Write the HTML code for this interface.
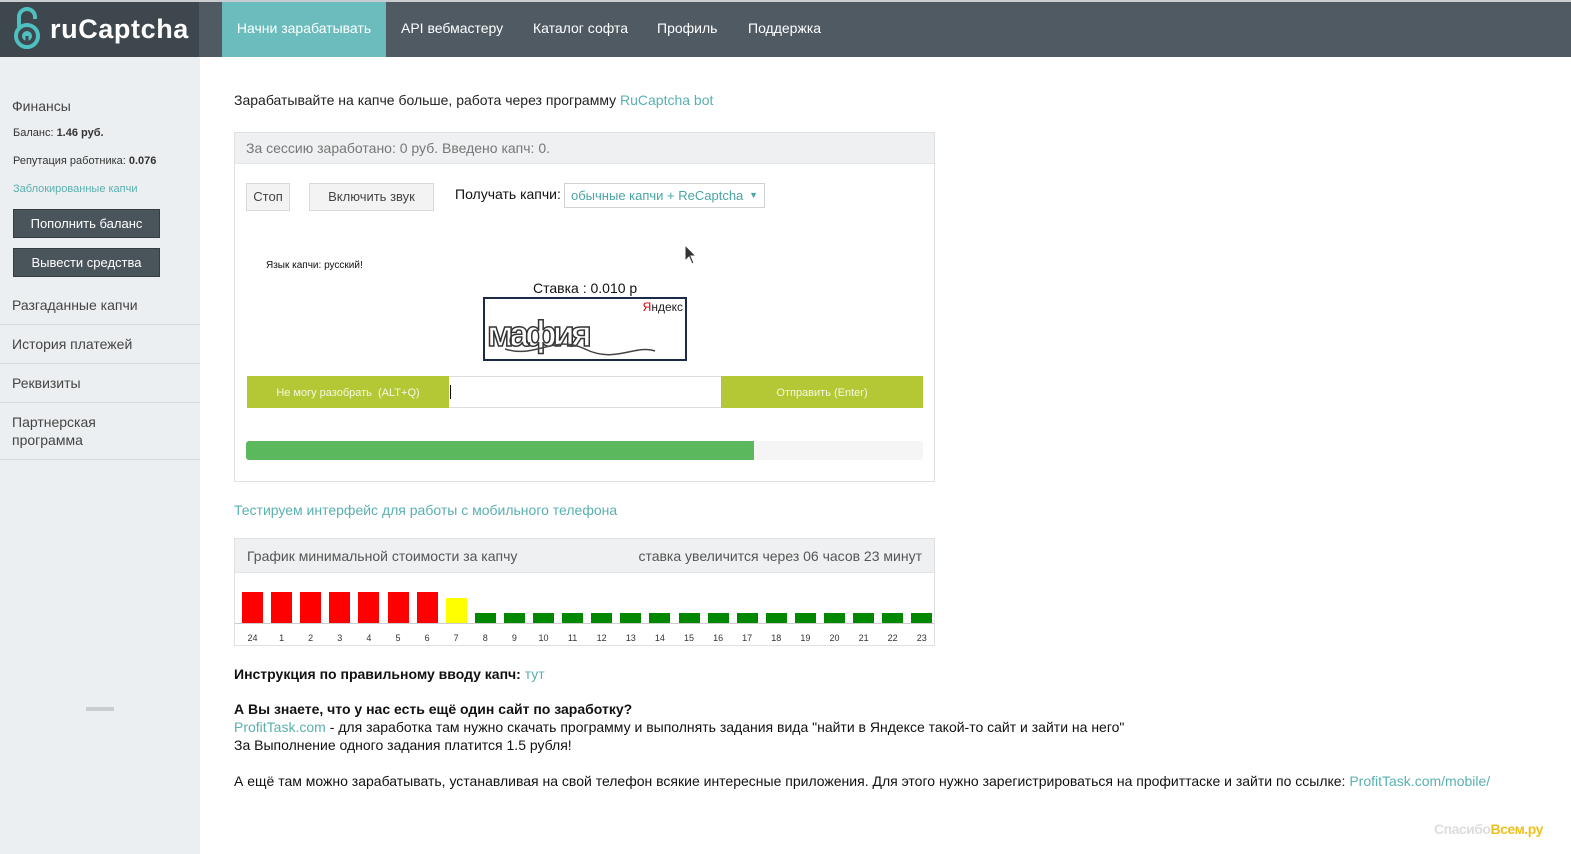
<!DOCTYPE html>
<html><head><meta charset="utf-8"><style>
*{margin:0;padding:0;box-sizing:border-box}
body{width:1571px;height:852px;position:relative;overflow:hidden;background:#fff;font-family:"Liberation Sans","Noto Sans CJK SC",sans-serif;color:#222}
#w{position:absolute;left:1px;top:1px;width:1571px;height:852px}
.a{position:absolute;white-space:nowrap}
.top{left:-1px;top:-1px;width:1572px;height:57px;background:#4f5a62;border-top:2px solid #c9cdd0}
.logo{left:-1px;top:1px;width:199px;height:55px;background:#3e474e}
.nav{top:1px;height:55px;line-height:52px;font-size:14px;color:#fff}
.side{left:-1px;top:56px;width:200px;height:797px;background:#eceff1}
.sb{left:13px;width:147px;height:29px;background:#4a545b;border:1px solid #353d43;color:#fff;font-size:13px;text-align:center;line-height:27px}
.si{left:-1px;width:200px;border-bottom:1px solid #d6dadd;font-size:14px;color:#444;padding-left:12px}
.lnk{color:#5ab0b0}
.bar{position:absolute;width:21px}
.lbl{position:absolute;top:632px;font-size:9px;color:#333;width:29px;text-align:center}
</style></head><body><div id="w">
<div class="a top"></div>
<div class="a logo">
<svg style="position:absolute;left:13px;top:5px" width="30" height="42" viewBox="0 0 30 42"><path d="M6 20 V10 a8 8 0 0 1 16 0 V12" fill="none" stroke="#4fc0c0" stroke-width="4"/><circle cx="14" cy="29" r="11" fill="none" stroke="#4fc0c0" stroke-width="4"/><circle cx="14" cy="29" r="5" fill="#4fc0c0"/><rect x="12.5" y="29" width="3" height="6" fill="#3e474e"/></svg>
<div class="a" style="left:50px;top:12px;font-size:27px;font-weight:bold;color:#fff;letter-spacing:0.6px">ruCaptcha</div>
</div>
<div class="a nav" style="left:221px;width:164px;background:#6bbcbc;text-align:center">Начни зарабатывать</div>
<div class="a nav" style="left:400px">API вебмастеру</div>
<div class="a nav" style="left:532px">Каталог софта</div>
<div class="a nav" style="left:656px">Профиль</div>
<div class="a nav" style="left:747px">Поддержка</div>

<div class="a side"></div>
<div class="a" style="left:11px;top:97px;font-size:14px;color:#444">Финансы</div>
<div class="a" style="left:12px;top:126px;font-size:11px;color:#333">Баланс: <b>1.46 руб.</b></div>
<div class="a" style="left:12px;top:154px;font-size:11px;color:#333">Репутация работника: <b>0.076</b></div>
<div class="a lnk" style="left:12px;top:182px;font-size:11px">Заблокированные капчи</div>
<div class="a sb" style="left:12px;top:208px">Пополнить баланс</div>
<div class="a sb" style="left:12px;top:247px">Вывести средства</div>
<div class="a si" style="top:287px;height:37px;line-height:34px">Разгаданные капчи</div>
<div class="a si" style="top:324px;height:39px;line-height:38px">История платежей</div>
<div class="a si" style="top:363px;height:39px;line-height:38px">Реквизиты</div>
<div class="a si" style="top:402px;height:57px;padding-top:10px;line-height:18px;white-space:normal">Партнерская<br>программа</div>
<div class="a" style="left:85px;top:706px;width:28px;height:4px;background:#c8cdd1"></div>

<div class="a" style="left:233px;top:91px;font-size:14px">Зарабатывайте на капче больше, работа через программу <span class="lnk">RuCaptcha bot</span></div>
<div class="a" style="left:233px;top:131px;width:701px;height:350px;border:1px solid #dfe2e4"></div>
<div class="a" style="left:234px;top:132px;width:699px;height:31px;background:#eef0f1;border-bottom:1px solid #e2e5e7;font-size:14px;color:#777;padding-left:11px;line-height:31px">За сессию заработано: 0 руб. Введено капч: 0.</div>
<div class="a" style="left:245px;top:182px;width:44px;height:28px;background:#f3f3f3;border:1px solid #d8d8d8;font-size:13px;color:#444;text-align:center;line-height:26px">Стоп</div>
<div class="a" style="left:308px;top:182px;width:125px;height:28px;background:#f3f3f3;border:1px solid #d8d8d8;font-size:13px;color:#444;text-align:center;line-height:26px">Включить звук</div>
<div class="a" style="left:454px;top:185px;font-size:14px;color:#111">Получать капчи:</div>
<div class="a" style="left:563px;top:182px;width:201px;height:25px;border:1px solid #cfd3d6;font-size:13px;color:#4aa5a5;padding-left:6px;line-height:23px">обычные капчи + ReCaptcha <span style="position:absolute;right:6px;font-size:9px">▼</span></div>
<svg class="a" style="left:683px;top:243px" width="14" height="22" viewBox="0 0 14 22"><path d="M1 1 V17 L5 13 L8 20 L10 19 L7 12 L12 12 Z" fill="#333" stroke="#fff" stroke-width="1"/></svg>
<div class="a" style="left:265px;top:259px;font-size:10px;color:#111">Язык капчи: русский!</div>
<div class="a" style="left:532px;top:279px;font-size:14px;color:#111">Ставка : 0.010 р</div>
<div class="a" style="left:482px;top:296px;width:204px;height:64px;border:2px solid #1b2a48;background:#fff;overflow:hidden">
<div class="a" style="right:2px;top:1px;font-size:12px;color:#222"><span style="color:#d00">Я</span>ндекс</div>
<div class="a" style="left:2px;top:14px;font-size:36px;font-weight:bold;color:#fff;-webkit-text-stroke:1.5px #333;letter-spacing:-4px">мафия</div>
<svg class="a" style="left:0;top:30px" width="200" height="30"><path d="M20 20 C50 30 70 5 100 20 S150 15 170 22" fill="none" stroke="#444" stroke-width="1.5"/></svg>
</div>
<div class="a" style="left:246px;top:375px;width:676px;height:32px;border:1px solid #ddd;background:#fff"></div>
<div class="a" style="left:246px;top:375px;width:202px;height:32px;background:#b4c836;color:#f4f8e0;font-size:11px;text-align:center;line-height:34px">Не могу разобрать&nbsp; (ALT+Q)</div>
<div class="a" style="left:449px;top:384px;width:1px;height:14px;background:#000"></div>
<div class="a" style="left:720px;top:375px;width:202px;height:32px;background:#b4c836;color:#f4f8e0;font-size:11px;text-align:center;line-height:34px">Отправить (Enter)</div>
<div class="a" style="left:245px;top:440px;width:677px;height:19px;background:#f5f5f5;border-radius:3px"></div>
<div class="a" style="left:245px;top:440px;width:508px;height:19px;background:#5cb85c;border-radius:3px 0 0 3px"></div>

<div class="a lnk" style="left:233px;top:501px;font-size:14px">Тестируем интерфейс для работы с мобильного телефона</div>
<div class="a" style="left:233px;top:537px;width:701px;height:108px;border:1px solid #dfe2e4"></div>
<div class="a" style="left:234px;top:538px;width:699px;height:34px;background:#eef0f1;border-bottom:1px solid #e2e5e7;font-size:14px;color:#555;line-height:34px;padding:0 12px">График минимальной стоимости за капчу<span style="float:right">ставка увеличится через 06 часов 23 минут</span></div>
<div class="a" style="left:234px;top:622px;width:699px;height:1px;background:#ccc"></div>
<div id="ch"></div>
<script>
var h='',c=document.getElementById('ch');
var labels=[24,1,2,3,4,5,6,7,8,9,10,11,12,13,14,15,16,17,18,19,20,21,22,23];
for(var i=0;i<24;i++){var x=241+i*29.1,col,t;
if(i<7){col='#f00';t=591}else if(i==7){col='#ff0';t=597}else{col='#080';t=612}
h+='<div class="bar" style="left:'+x+'px;top:'+t+'px;height:'+(622-t)+'px;background:'+col+'"></div>';
h+='<div class="lbl" style="left:'+(x-4)+'px">'+labels[i]+'</div>';}
c.innerHTML=h;
</script>

<div class="a" style="left:233px;top:665px;font-size:14px;font-weight:bold;color:#111">Инструкция по правильному вводу капч: <span class="lnk" style="font-weight:normal">тут</span></div>
<div class="a" style="left:233px;top:700px;font-size:14px;font-weight:bold;color:#111">А Вы знаете, что у нас есть ещё один сайт по заработку?</div>
<div class="a" style="left:233px;top:718px;font-size:14px;color:#111"><span class="lnk">ProfitTask.com</span> - для заработка там нужно скачать программу и выполнять задания вида "найти в Яндексе такой-то сайт и зайти на него"</div>
<div class="a" style="left:233px;top:736px;font-size:14px;color:#111">За Выполнение одного задания платится 1.5 рубля!</div>
<div class="a" style="left:233px;top:772px;font-size:14px;color:#111">А ещё там можно зарабатывать, устанавливая на свой телефон всякие интересные приложения. Для этого нужно зарегистрироваться на профиттаске и зайти по ссылке: <span class="lnk">ProfitTask.com/mobile/</span></div>
<div class="a" style="left:1433px;top:820px;font-size:14px;font-weight:bold;color:#ddd;letter-spacing:-0.5px">Спасибо<span style="color:#f0c020">Всем.ру</span></div>
</div></body></html>
